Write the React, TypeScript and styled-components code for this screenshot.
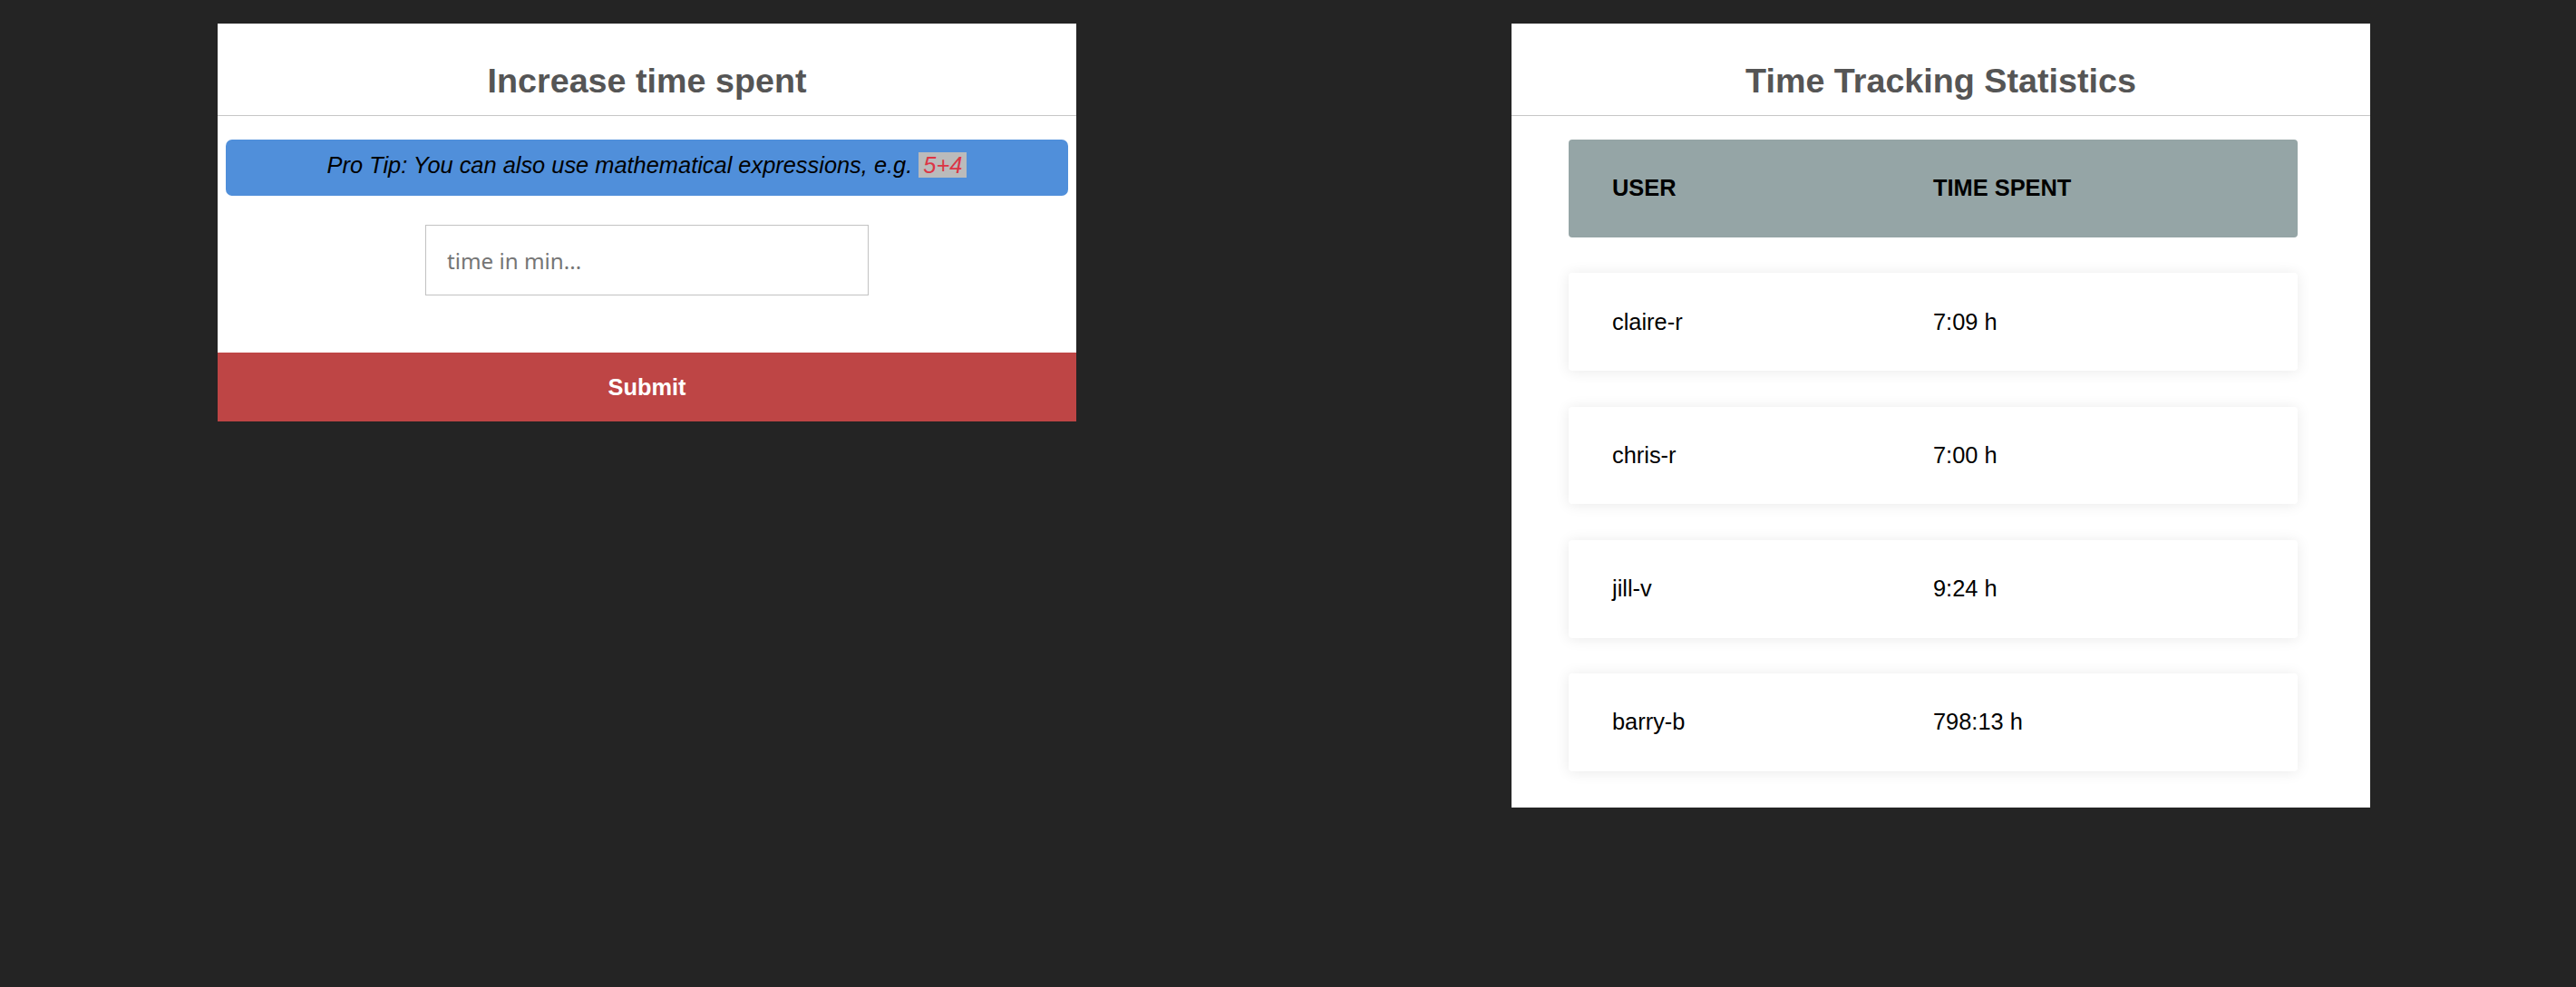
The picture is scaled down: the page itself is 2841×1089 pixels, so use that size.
import React, { useState } from "react";
import styled, { createGlobalStyle } from "styled-components";

const GlobalStyle = createGlobalStyle`
  html, body {
    margin: 0;
    padding: 0;
    background: #242424;
  }
  body {
    font-family: "Liberation Sans", Arial, sans-serif;
  }
`;

const Page = styled.main`
  display: flex;
  align-items: flex-start;
  gap: 480px;
  padding: 26px 0 0 240px;
  min-height: 1089px;
  box-sizing: border-box;
`;

const Card = styled.section`
  display: flex;
  flex-direction: column;
  width: 947px;
  background: #fff;
`;

const CardTitle = styled.h2`
  margin: 0;
  padding: 41px 0 16px;
  border-bottom: 1px solid #c6c6c6;
  font-size: 37.7px;
  line-height: 44px;
  font-weight: 700;
  color: #555;
  text-align: center;
`;

const Tip = styled.p`
  margin: 26px 9px 0;
  padding: 14px 0 19px;
  border-radius: 7px;
  background: #508fda;
  color: #000;
  font-size: 25.4px;
  line-height: 29px;
  font-style: italic;
  text-align: center;
`;

const Code = styled.code`
  padding: 0 5px;
  background: #bbbbbb;
  color: #dc3545;
  font-family: "Liberation Sans", Arial, sans-serif;
  font-size: 25.4px;
  font-style: italic;
`;

const Form = styled.form`
  display: flex;
  flex-direction: column;
  align-items: center;
`;

const TimeInput = styled.input`
  width: 489px;
  height: 78px;
  margin: 32px 0 63px;
  padding: 0 23px;
  box-sizing: border-box;
  border: 1px solid #c2c2c2;
  outline: none;
  font-family: "Noto Sans", sans-serif;
  font-size: 24.2px;
  color: #222;

  &::placeholder {
    color: #757575;
  }
`;

const SubmitButton = styled.button`
  align-self: stretch;
  height: 76px;
  border: 0;
  background: #be4545;
  color: #fff;
  font-family: "Liberation Sans", Arial, sans-serif;
  font-size: 25.4px;
  font-weight: 700;
  cursor: pointer;
`;

const StatsList = styled.div`
  display: flex;
  flex-direction: column;
  gap: 39.6px;
  margin: 26px 80px 0 63px;
  padding-bottom: 40px;
`;

const StatsRow = styled.div<{ $head?: boolean }>`
  display: grid;
  grid-template-columns: 1fr 1fr;
  align-items: center;
  height: 107.7px;
  padding: 0 48px;
  border-radius: 4px;
  background: ${(p) => (p.$head ? "#95a5a6" : "#fff")};
  box-shadow: ${(p) => (p.$head ? "none" : "0 1px 16px rgba(0, 0, 0, 0.09)")};
  color: #000;
  font-size: 25.4px;
  font-weight: ${(p) => (p.$head ? 700 : 400)};
`;

const stats = [
  { user: "claire-r", time: "7:09 h" },
  { user: "chris-r", time: "7:00 h" },
  { user: "jill-v", time: "9:24 h" },
  { user: "barry-b", time: "798:13 h" },
];

function TimeForm() {
  const [value, setValue] = useState("");

  return (
    <Card>
      <CardTitle>Increase time spent</CardTitle>
      <Tip>
        Pro Tip: You can also use mathematical expressions, e.g. <Code>5+4</Code>
      </Tip>
      <Form onSubmit={(e) => e.preventDefault()}>
        <TimeInput
          type="text"
          placeholder="time in min..."
          value={value}
          onChange={(e) => setValue(e.target.value)}
        />
        <SubmitButton type="submit">Submit</SubmitButton>
      </Form>
    </Card>
  );
}

function Statistics() {
  return (
    <Card>
      <CardTitle>Time Tracking Statistics</CardTitle>
      <StatsList>
        <StatsRow $head>
          <span>USER</span>
          <span>TIME SPENT</span>
        </StatsRow>
        {stats.map((item) => (
          <StatsRow key={item.user}>
            <span>{item.user}</span>
            <span>{item.time}</span>
          </StatsRow>
        ))}
      </StatsList>
    </Card>
  );
}

export default function App() {
  return (
    <>
      <GlobalStyle />
      <Page>
        <TimeForm />
        <Statistics />
      </Page>
    </>
  );
}
